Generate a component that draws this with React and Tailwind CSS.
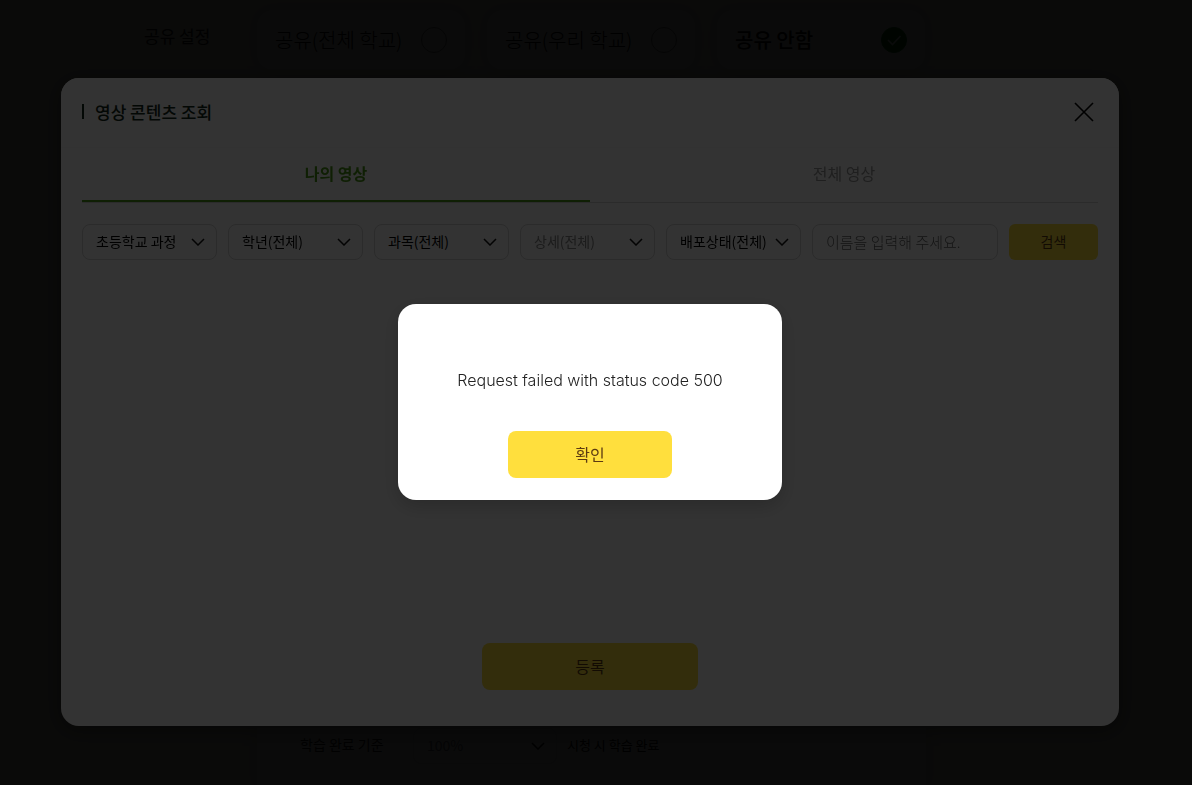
import { useState } from 'react';

const FILTERS = [
  { id: 'course', label: '학교 과정', value: '초등학교 과정' },
  { id: 'grade', label: '학년', value: '학년(전체)' },
  { id: 'subject', label: '과목', value: '과목(전체)' },
  { id: 'detail', label: '상세', value: '상세(전체)', disabled: true },
  { id: 'status', label: '배포상태', value: '배포상태(전체)' },
];

const SHARE_OPTIONS = [
  { id: 'all', label: '공유(전체 학교)' },
  { id: 'mine', label: '공유(우리 학교)' },
  { id: 'none', label: '공유 안함' },
];

const TABS = ['나의 영상', '전체 영상'];

function Chevron() {
  return (
    <svg viewBox="0 0 14 8" className="pointer-events-none absolute right-3 top-1/2 h-2 w-3.5 -translate-y-1/2" fill="none" stroke="#111" strokeWidth="1.5" aria-hidden="true">
      <path d="M1 1l6 6 6-6" />
    </svg>
  );
}

function ShareOption({ option, checked, onChange }) {
  return (
    <label className={`flex h-[60px] w-[208px] items-center justify-between rounded-2xl bg-white px-[18px] text-xl text-black shadow-[0_0_16px_rgba(0,0,0,0.12)] ${checked ? 'font-medium' : 'font-light'}`}>
      {option.label}
      <span className="relative h-[26px] w-[26px]">
        <input
          type="radio"
          name="share"
          checked={checked}
          onChange={() => onChange(option.id)}
          className="block h-[26px] w-[26px] appearance-none rounded-full border border-[#888] checked:border-[#007a10] checked:bg-[#007a10]"
        />
        {checked && (
          <svg viewBox="0 0 26 26" className="pointer-events-none absolute inset-0" fill="none" stroke="#fff" strokeWidth="1.6" aria-hidden="true">
            <path d="M7 13l4.500 4.500 8-8.500" />
          </svg>
        )}
      </span>
    </label>
  );
}

// form page behind the dialogs
function SettingsPage() {
  const [share, setShare] = useState('none');

  return (
    <main className="flex h-screen flex-col justify-between overflow-hidden bg-[#fcfbee]">
      <div role="radiogroup" aria-labelledby="share-label" className="flex pl-36 pt-[10px]">
        <span id="share-label" className="w-[113px] shrink-0 pt-[14px] text-[17px] leading-6">공유 설정</span>
        <div className="flex gap-[22px]">
          {SHARE_OPTIONS.map((o) => (
            <ShareOption key={o.id} option={o} checked={share === o.id} onChange={setShare} />
          ))}
        </div>
      </div>

      <div className="ml-[257px] flex h-[60px] w-[669px] items-start bg-white pl-[43px] pt-[3px] shadow-[0_0_16px_rgba(0,0,0,0.12)]">
        <label htmlFor="criteria" className="w-[113px] pt-1.5 text-sm">학습 완료 기준</label>
        <div className="relative w-[144px]">
          <select id="criteria" className="h-9 w-full appearance-none rounded-lg border border-gray-200 pb-0.5 pl-[13px] text-sm text-gray-500">
            <option>100%</option>
          </select>
          <Chevron />
        </div>
        <span className="pl-[10px] pt-[7px] text-[13px] leading-5 text-black">시청 시 학습 완료</span>
      </div>
    </main>
  );
}

function VideoDialog() {
  const [tab, setTab] = useState(TABS[0]);
  const [name, setName] = useState('');

  return (
    <div className="fixed inset-0 flex items-center bg-black/80 pl-[61px] pr-[73px] pt-[19px]">
      <section role="dialog" aria-labelledby="video-title" className="flex h-[648px] w-full flex-col rounded-[18px] bg-white shadow-[0_4px_20px_rgba(0,0,0,0.4)]">
        <header className="flex h-[70px] items-center justify-between rounded-t-[18px] border-b border-[#f8f8f8] bg-[#fcfcfc] pb-0.5 pl-[21px] pr-6">
          <h2 id="video-title" className="flex items-center gap-[11px] text-[17px] font-medium leading-6 text-[#13291a]">
            <span className="h-[15px] w-0.5 bg-[#13291a]" />
            영상 콘텐츠 조회
          </h2>
          <button type="button" aria-label="닫기">
            <svg viewBox="0 0 22 22" className="h-[22px] w-[22px]" fill="none" stroke="#000" strokeWidth="1.6" aria-hidden="true">
              <path d="M2 2l18 18M20 2L2 20" />
            </svg>
          </button>
        </header>

        <div className="flex grow flex-col px-[21px]">
          <div role="tablist" className="flex h-[55px] border-b border-[#d4d4d4]">
            {TABS.map((t) => (
              <button
                key={t}
                type="button"
                role="tab"
                aria-selected={tab === t}
                onClick={() => setTab(t)}
                className={`flex-1 border-b-2 pb-0.5 text-base ${tab === t ? 'border-[#4c9c14] font-bold text-[#4c9c14]' : 'border-transparent text-[#999]'}`}
              >
                {t}
              </button>
            ))}
          </div>

          <form className="flex gap-[11px] pt-[21px]" onSubmit={(e) => e.preventDefault()}>
            {FILTERS.map((f) => (
              <div key={f.id} className="relative w-[135px] shrink-0">
                <select
                  aria-label={f.label}
                  disabled={f.disabled}
                  className="h-9 w-full appearance-none rounded-lg border border-[#d4d4d4] bg-white pb-0.5 pl-[13px] text-sm text-black disabled:text-[#8a8a8a] disabled:opacity-100"
                >
                  <option>{f.value}</option>
                </select>
                <Chevron />
              </div>
            ))}
            <input
              type="text"
              aria-label="이름"
              value={name}
              onChange={(e) => setName(e.target.value)}
              placeholder="이름을 입력해 주세요."
              className="h-9 min-w-0 grow rounded-lg border border-[#d4d4d4] px-[13px] pb-0.5 text-[15px] font-light placeholder:text-[#666]"
            />
            <button type="submit" className="h-9 w-[89px] shrink-0 rounded-md bg-[#ffdf3d] pb-0.5 text-sm text-[#5c3b12]">검색</button>
          </form>

          <button type="button" className="mx-auto mb-9 mt-auto h-[47px] w-[216px] rounded-lg bg-[#ffdf3d] pb-0.5 text-base text-[#5c3b12]">등록</button>
        </div>
      </section>
    </div>
  );
}

function AlertDialog({ message, onConfirm }) {
  return (
    <div className="fixed inset-0 flex items-center justify-center bg-black/80 pr-3 pt-[19px]">
      <section role="alertdialog" aria-describedby="alert-message" className="flex w-[384px] flex-col items-center rounded-[18px] bg-white pb-[22px] pt-16 shadow-[0_6px_20px_rgba(0,0,0,0.2)]">
        <p id="alert-message" className="font-['Inter','Noto_Sans_CJK_KR',sans-serif] text-base font-light leading-6 text-[#222]">{message}</p>
        <button type="button" onClick={onConfirm} className="mt-[39px] h-[47px] w-[164px] rounded-lg bg-[#ffdf3d] pb-0.5 text-base text-[#5c3b12]">확인</button>
      </section>
    </div>
  );
}

export default function App() {
  const [error, setError] = useState('Request failed with status code 500');

  return (
    <div className="font-['Noto_Sans_CJK_KR',sans-serif] text-[#222]">
      <SettingsPage />
      <VideoDialog />
      {error && <AlertDialog message={error} onConfirm={() => setError('')} />}
    </div>
  );
}
